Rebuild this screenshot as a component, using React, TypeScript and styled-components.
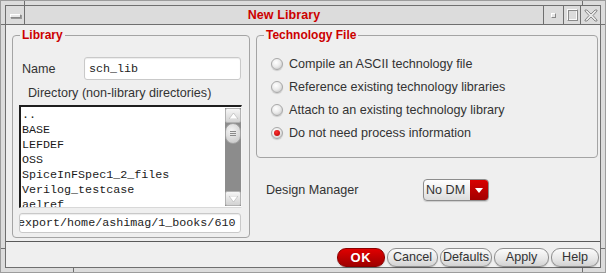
import React from 'react';
import styled, { createGlobalStyle } from 'styled-components';

const Global = createGlobalStyle`
  html, body { margin: 0; padding: 0; background: #dcdcdc; }
  body { font-family: "Liberation Sans", Arial, sans-serif; }
  * { box-sizing: border-box; }
`;

const Frame = styled.div`
  position: relative;
  width: 606px;
  height: 273px;
  background: #dcdcdc;
  border: 1px solid #9c9c9c;
  padding: 4px 4px 5px 4px;
  display: flex;
  flex-direction: column;
`;

const Tick = styled.span<{ $v?: boolean }>`
  position: absolute;
  background: #6f6f6f;
  width: ${(p) => (p.$v ? '1px' : '4px')};
  height: ${(p) => (p.$v ? '4px' : '1px')};
`;

const TitleBar = styled.div`
  height: 20px;
  flex: none;
  display: flex;
  border: 1px solid #6f6f6f;
  background: #dcdcdc;
`;

const TitleCell = styled.div<{ $w: number; $left?: boolean }>`
  width: ${(p) => p.$w}px;
  flex: none;
  display: flex;
  align-items: center;
  justify-content: center;
  ${(p) => (p.$left ? 'border-right: 1px solid #6f6f6f;' : 'border-left: 1px solid #6f6f6f;')}
`;

const MenuBar = styled.span`
  width: 11px;
  height: 4px;
  margin-top: 1px;
  background: #e8e8e8;
  border: 1px solid #8a8a8a;
  border-top-color: #fff;
  border-left-color: #fff;
  box-shadow: 1px 1px 0 #9a9a9a;
`;

const TinySquare = styled.span`
  width: 5px;
  height: 5px;
  margin-top: 1px;
  background: #e6e6e6;
  border: 1px solid #888;
  border-top-color: #fff;
  border-left-color: #fff;
`;

const BigSquare = styled.span`
  width: 11px;
  height: 12px;
  border: 1px solid #8a8a8a;
  border-top-color: #fafafa;
  border-left-color: #fafafa;
  box-shadow: inset 1px 1px 0 #8a8a8a, inset -1px -1px 0 #fafafa;
`;

const Title = styled.div`
  flex: 1;
  text-align: center;
  color: #cc0000;
  font-weight: bold;
  font-size: 12.5px;
  line-height: 18px;
  letter-spacing: 0.1px;
`;

const Content = styled.div`
  flex: 1;
  display: flex;
  flex-direction: column;
  background: #efefef;
  border: 1px solid #6f6f6f;
  border-top: none;
`;

const Main = styled.div`
  height: 216px;
  display: flex;
  gap: 6px;
  padding: 3px 0 0 6px;
`;

const Group = styled.fieldset<{ $w: number }>`
  width: ${(p) => p.$w}px;
  margin: 0;
  flex: none;
  border: 1px solid #a4a4a4;
  border-radius: 4px;
  padding: 0 7px 0 7px;
  min-width: 0;
`;

const Legend = styled.legend`
  color: #cc0000;
  font-weight: bold;
  font-size: 12px;
  line-height: 14px;
  padding: 0 2px;
  margin-left: 0;
`;

const LeftGroup = styled(Group)`
  height: 210px;
  padding-top: 15px;
  display: flex;
  flex-direction: column;
`;

const Label = styled.span<{ $w?: number }>`
  color: #333;
  font-size: 12.6px;
  line-height: 16px;
  ${(p) => (p.$w ? `width: ${p.$w}px; flex: none;` : '')}
`;

const NameRow = styled.div`
  display: flex;
  align-items: center;
  height: 23px;
  margin-left: 2px;
`;

const TextField = styled.div<{ $w?: number; $h: number }>`
  ${(p) => (p.$w ? `width: ${p.$w}px;` : '')}
  height: ${(p) => p.$h}px;
  background: #fff;
  border: 1px solid #c9c9c9;
  border-radius: 3px;
  box-shadow: inset 0 1px 1px rgba(0, 0, 0, 0.08);
  font-family: "Liberation Mono", "Courier New", monospace;
  font-size: 11.7px;
  color: #222;
  display: flex;
  align-items: center;
  white-space: nowrap;
  overflow: hidden;
`;

const NameField = styled(TextField)`
  padding-left: 4px;
`;

const PathField = styled(TextField)`
  margin: 5px 1px 0 -1px;
  text-indent: -2px;
`;

const DirLabel = styled(Label)`
  margin: 5px 0 0 8px;
`;

const ListBox = styled.div`
  margin: 4px 0 0 -1px;
  height: 103px;
  display: flex;
  background: #fff;
  border-top: 2px solid #1e1e1e;
  border-left: 2px solid #1e1e1e;
  border-right: 1px solid #f4f4f4;
  border-bottom: 1px solid #d8d8d8;
`;

const Items = styled.div`
  flex: 1;
  overflow: hidden;
  padding: 1px 0 0 1px;
  font-family: "Liberation Mono", "Courier New", monospace;
  font-size: 11.7px;
  line-height: 15px;
  color: #1a1a1a;
`;

const Item = styled.div`
  white-space: nowrap;
`;

const Scrollbar = styled.div`
  width: 16px;
  margin: 1px 0 1px 0;
  display: flex;
  flex-direction: column;
  background: #8c8c8c;
`;

const ArrowBtn = styled.div`
  height: 15px;
  flex: none;
  display: flex;
  align-items: center;
  justify-content: center;
  background: linear-gradient(#f6f6f6, #d2d2d2);
  border: 1px solid #b2b2b2;
  border-radius: 2px;
`;

const Track = styled.div`
  flex: 1;
  display: flex;
  flex-direction: column;
`;

const Thumb = styled.div`
  height: 21px;
  width: 16px;
  border-radius: 8px;
  background: radial-gradient(circle at 40% 35%, #f4f4f4, #c4c4c4);
  border: 1px solid #a2a2a2;
  display: flex;
  flex-direction: column;
  align-items: center;
  justify-content: center;
  gap: 1px;
`;

const Grip = styled.span`
  width: 6px;
  height: 1px;
  background: #8a8a8a;
`;

const RightCol = styled.div`
  display: flex;
  flex-direction: column;
`;

const RightGroup = styled(Group)`
  padding-top: 10px;
  padding-bottom: 13px;
`;

const RadioRow = styled.label`
  display: flex;
  align-items: center;
  height: 23px;
  margin-left: 7px;
  gap: 6px;
`;

const Radio = styled.span<{ $on?: boolean }>`
  width: 12px;
  height: 12px;
  flex: none;
  border-radius: 50%;
  border: 1px solid #a8a8a8;
  background: radial-gradient(circle at 40% 35%, #ffffff 0%, #ececec 45%, #bdbdbd 100%);
  box-shadow: 0 1px 1px rgba(0, 0, 0, 0.15);
  display: flex;
  align-items: center;
  justify-content: center;
  &::after {
    content: '';
    display: ${(p) => (p.$on ? 'block' : 'none')};
    width: 6px;
    height: 6px;
    border-radius: 50%;
    background: radial-gradient(circle at 40% 35%, #ff3030, #b00000);
  }
`;

const DMRow = styled.div`
  display: flex;
  align-items: center;
  height: 22px;
  margin: 21px 0 0 10px;
`;

const Combo = styled.div`
  width: 66px;
  height: 22px;
  display: flex;
  border: 1px solid #8d8d8d;
  border-radius: 4px;
  overflow: hidden;
  background: linear-gradient(#ffffff, #dcdcdc);
  box-shadow: 0 1px 1px rgba(0, 0, 0, 0.15);
`;

const ComboText = styled.span`
  flex: 1;
  color: #333;
  font-size: 12.6px;
  line-height: 20px;
  padding-left: 2px;
`;

const ComboArrow = styled.span`
  width: 18px;
  flex: none;
  background: linear-gradient(#d80000, #a20000);
  display: flex;
  align-items: center;
  justify-content: center;
`;

const ButtonBar = styled.div`
  flex: 1;
  border-top: 1px solid #5a5a5a;
  display: flex;
  justify-content: flex-end;
  align-items: flex-start;
  gap: 2px;
  padding: 6px 1px 0 0;
`;

const Button = styled.button<{ $w: number; $primary?: boolean }>`
  width: ${(p) => p.$w}px;
  height: 19px;
  padding: 0;
  margin: 0;
  border-radius: 9px;
  font-family: "Liberation Sans", Arial, sans-serif;
  font-size: ${(p) => (p.$primary ? '13px' : '12.6px')};
  font-weight: ${(p) => (p.$primary ? 'bold' : 'normal')};
  line-height: 17px;
  letter-spacing: ${(p) => (p.$primary ? '0.8px' : '0')};
  color: ${(p) => (p.$primary ? '#fff' : '#333')};
  border: 1px solid ${(p) => (p.$primary ? '#8a0000' : '#8e8e8e')};
  background: ${(p) =>
    p.$primary
      ? 'linear-gradient(#e00000, #b80000 60%, #a00000)'
      : 'linear-gradient(#fbfbfb, #e6e6e6 60%, #d2d2d2)'};
  box-shadow: 0 1px 1px rgba(0, 0, 0, 0.18);
`;

const UpTri = () => (
  <svg width="9" height="6" viewBox="0 0 9 6">
    <polygon points="4.5,0 9,6 0,6" fill="#ffffff" stroke="#b0b0b0" strokeWidth="0.6" />
  </svg>
);

const DownTri = () => (
  <svg width="9" height="6" viewBox="0 0 9 6">
    <polygon points="0,0 9,0 4.5,6" fill="#ffffff" stroke="#b0b0b0" strokeWidth="0.6" />
  </svg>
);

const CloseX = () => (
  <svg width="14" height="13" viewBox="0 0 14 13">
    <path
      d="M1 1 L3 1 L7 5 L11 1 L13 1 L13 2 L9 6.5 L13 11 L13 12 L11 12 L7 8 L3 12 L1 12 L1 11 L5 6.5 L1 2 Z"
      fill="#e8e8e8"
      stroke="#8a8a8a"
      strokeWidth="1"
    />
  </svg>
);

const items = ['..', 'BASE', 'LEFDEF', 'OSS', 'SpiceInFSpec1_2_files', 'Verilog_testcase', 'aelref'];

const radios = [
  'Compile an ASCII technology file',
  'Reference existing technology libraries',
  'Attach to an existing technology library',
  'Do not need process information',
];

export default function App() {
  return (
    <>
      <Global />
      <Frame>
        <Tick $v style={{ left: 23, top: 0 }} />
        <Tick $v style={{ left: 581, top: 0 }} />
        <Tick style={{ left: 0, top: 23 }} />
        <Tick style={{ left: 600, top: 23 }} />
        <Tick style={{ left: 0, top: 247 }} />
        <Tick style={{ left: 600, top: 247 }} />
        <Tick $v style={{ left: 72, top: 267 }} />
        <Tick $v style={{ left: 581, top: 267 }} />
        <TitleBar>
          <TitleCell $w={19} $left>
            <MenuBar />
          </TitleCell>
          <Title>New Library</Title>
          <TitleCell $w={20}>
            <TinySquare />
          </TitleCell>
          <TitleCell $w={17}>
            <BigSquare />
          </TitleCell>
          <TitleCell $w={20}>
            <CloseX />
          </TitleCell>
        </TitleBar>
        <Content>
          <Main>
            <LeftGroup $w={238}>
              <Legend>Library</Legend>
              <NameRow>
                <Label $w={62}>Name</Label>
                <NameField $w={157} $h={23}>sch_lib</NameField>
              </NameRow>
              <DirLabel>Directory (non-library directories)</DirLabel>
              <ListBox>
                <Items>
                  {items.map((it) => (
                    <Item key={it}>{it}</Item>
                  ))}
                </Items>
                <Scrollbar>
                  <ArrowBtn>
                    <UpTri />
                  </ArrowBtn>
                  <Track>
                    <Thumb>
                      <Grip />
                      <Grip />
                      <Grip />
                    </Thumb>
                  </Track>
                  <ArrowBtn>
                    <DownTri />
                  </ArrowBtn>
                </Scrollbar>
              </ListBox>
              <PathField $h={20}>export/home/ashimag/1_books/610</PathField>
            </LeftGroup>
            <RightCol>
              <RightGroup $w={342}>
                <Legend>Technology File</Legend>
                {radios.map((r, i) => (
                  <RadioRow key={r}>
                    <Radio $on={i === 3} />
                    <Label>{r}</Label>
                  </RadioRow>
                ))}
              </RightGroup>
              <DMRow>
                <Label $w={157}>Design Manager</Label>
                <Combo>
                  <ComboText>No DM</ComboText>
                  <ComboArrow>
                    <svg width="8" height="5" viewBox="0 0 8 5">
                      <polygon points="0,0 8,0 4,5" fill="#ffffff" />
                    </svg>
                  </ComboArrow>
                </Combo>
              </DMRow>
            </RightCol>
          </Main>
          <ButtonBar>
            <Button $w={48} $primary>OK</Button>
            <Button $w={51}>Cancel</Button>
            <Button $w={52}>Defaults</Button>
            <Button $w={55}>Apply</Button>
            <Button $w={48}>Help</Button>
          </ButtonBar>
        </Content>
      </Frame>
    </>
  );
}
